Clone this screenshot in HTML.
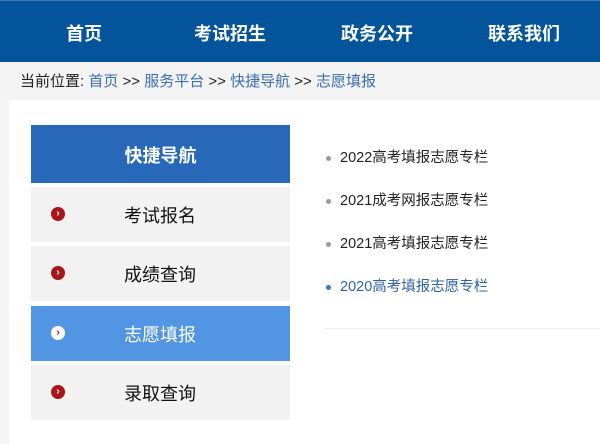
<!DOCTYPE html>
<html><head><meta charset="utf-8"><style>
*{margin:0;padding:0;box-sizing:border-box}
body{width:600px;height:444px;overflow:hidden;background:#f5f5f5;font-family:"Liberation Sans","Noto Sans CJK SC",sans-serif;position:relative}
.top{position:absolute;left:0;top:0;width:600px;height:62px;background:#03549a;border-top:1px solid #3d7bb6}
.top span{position:absolute;top:21px;color:#fff;font-weight:bold;font-size:18px;line-height:24px}
.bc{position:absolute;left:0;top:62px;width:600px;height:38px;background:#f3f3f3;font-size:15px;line-height:40px;padding-left:20px;color:#222}
.bc a{color:#3a6fb0}
.main{position:absolute;left:9px;top:100px;width:591px;height:344px;background:#fff}
.nh{position:absolute;left:31px;top:125px;width:259px;height:58px;background:#2868b8;color:#fff;font-weight:bold;font-size:18px;line-height:62px;text-align:center}
.it{position:absolute;left:31px;width:259px;height:55px;background:#f2f2f2;font-size:18px;line-height:58px;color:#111}
.it b{position:absolute;left:20px;top:20px;width:14px;height:14px;border-radius:50%;background:#a8151b;color:#fff;font-size:10px;line-height:14px;text-align:center;font-weight:bold}
.it span{position:absolute;left:93px}
.it.on{background:#5296e3;color:#fff}
.it.on b{background:#fff;color:#a8151b}
.li{position:absolute;left:340px;font-size:14.5px;color:#222;line-height:20px}
.li:before{content:"";position:absolute;left:-14px;top:8px;width:5px;height:5px;border-radius:50%;background:#999}
.li.bl{color:#2d62a8}.li.bl:before{background:#3a78cc}
.hr{position:absolute;left:325px;top:328px;width:275px;height:1px;background:#eee}
</style></head><body>
<div class="top"><span style="left:66px">首页</span><span style="left:194px">考试招生</span><span style="left:341px">政务公开</span><span style="left:488px">联系我们</span></div>
<div class="bc">当前位置: <a>首页</a> &gt;&gt; <a>服务平台</a> &gt;&gt; <a>快捷导航</a> &gt;&gt; <a>志愿填报</a></div>
<div class="main"></div>
<div class="nh">快捷导航</div>
<div class="it" style="top:187px"><b>›</b><span>考试报名</span></div>
<div class="it" style="top:246px"><b>›</b><span>成绩查询</span></div>
<div class="it on" style="top:306px"><b>›</b><span>志愿填报</span></div>
<div class="it" style="top:365px"><b>›</b><span>录取查询</span></div>
<div class="li" style="top:148px">2022高考填报志愿专栏</div>
<div class="li" style="top:191px">2021成考网报志愿专栏</div>
<div class="li" style="top:234px">2021高考填报志愿专栏</div>
<div class="li bl" style="top:277px">2020高考填报志愿专栏</div>
<div class="hr"></div>
</body></html>
